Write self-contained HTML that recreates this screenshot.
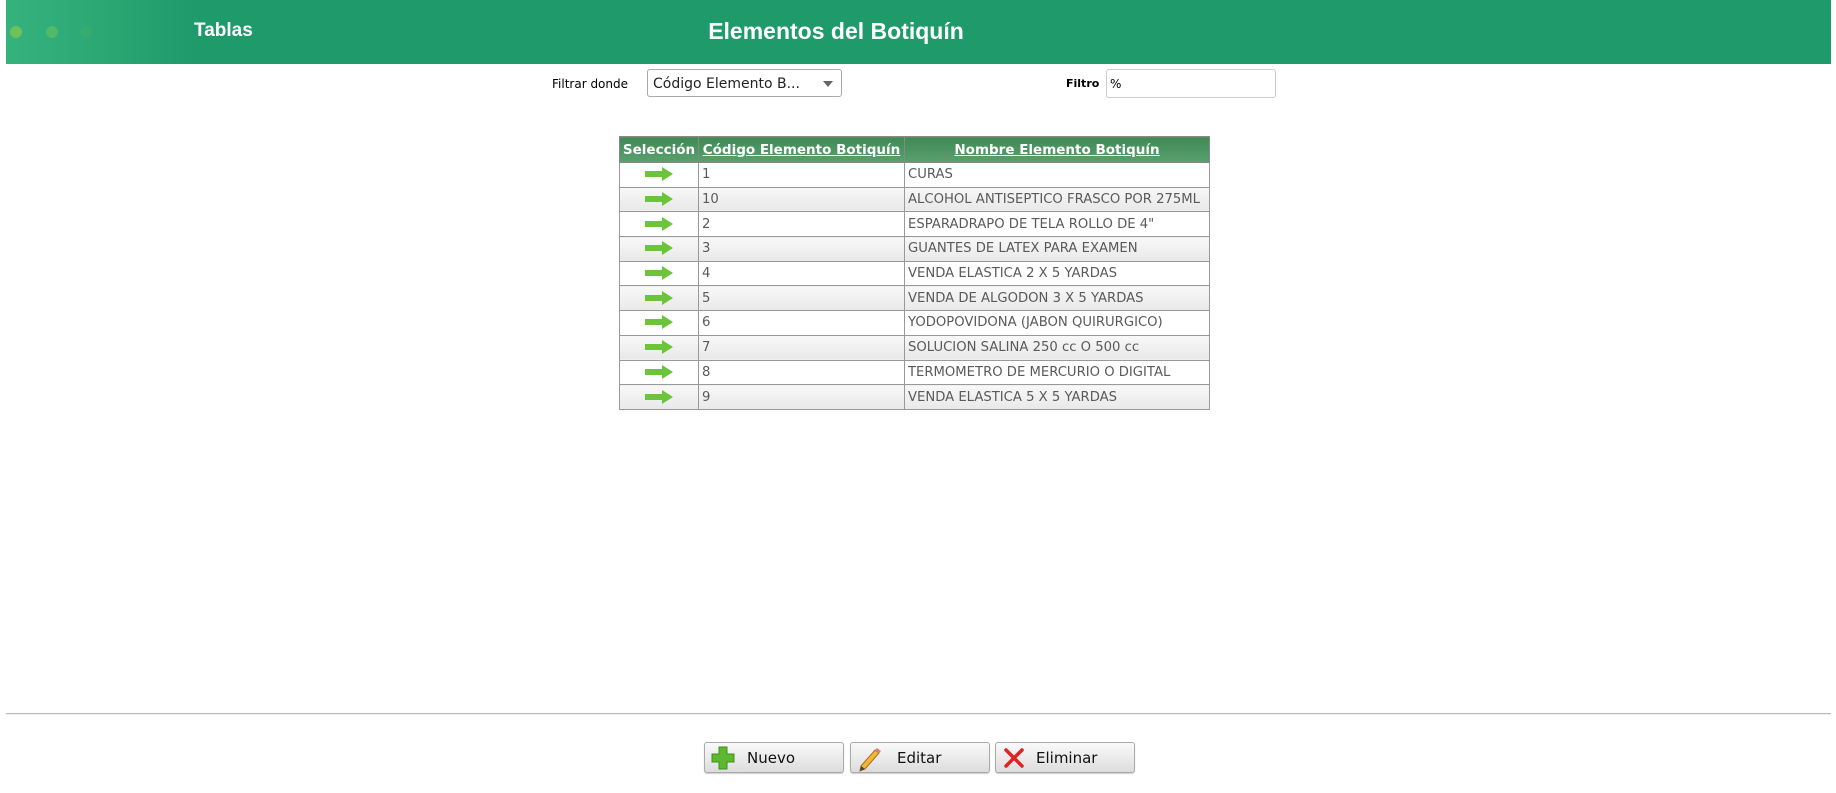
<!DOCTYPE html>
<html><head><meta charset="utf-8"><style>
body{margin:0;width:1836px;height:793px;background:#fff;font-family:"DejaVu Sans","Liberation Sans",sans-serif;position:relative;overflow:hidden}
.hdr{position:absolute;left:6px;top:0;width:1825px;height:64px;background:linear-gradient(90deg,#35b27d 0,#2aa673 110px,#1e9a6b 190px,#1e9a6b 100%)}
.dot{position:absolute;top:26px;width:12px;height:12px;border-radius:50%}
.hdr .t1{position:absolute;left:188px;top:20px;color:#fff;font:bold 19px "Liberation Sans",sans-serif}
.hdr .t2{position:absolute;left:0;width:1660px;text-align:center;top:18px;color:#fff;font:bold 23px "Liberation Sans",sans-serif}
.lbl{position:absolute;font-size:12px;color:#000;top:77px}
.sel{position:absolute;left:647px;top:69px;width:195px;height:28px;border:1px solid #aaa;border-radius:3px;font-size:14px;line-height:28px;box-sizing:border-box;padding-left:5px;color:#222;background:#fff}
.sel:after{content:"";position:absolute;right:8px;top:11px;border:5px solid transparent;border-top:6px solid #666}
.inp{position:absolute;left:1106px;top:69px;width:170px;height:29px;border:1px solid #ccc;border-radius:3px;box-sizing:border-box;font-size:12px;padding:7px 3px}
table{position:absolute;left:619px;top:136px;border-collapse:collapse;font-size:13.2px;color:#5a5a5a}
th{height:25px;background:linear-gradient(#3e8a54,#5aa070);color:#fff;font:bold 13.5px "DejaVu Sans",sans-serif;border:1px solid #888;padding:0 2px;white-space:nowrap}
th u{text-decoration:underline}
td{height:23.7px;border:1px solid #999;padding:0 3px;white-space:nowrap}
tr:nth-child(odd) td{background:linear-gradient(#f8f8f8,#e8e8e8)}
td.a{text-align:center}
.arr{display:inline-block;width:28px;height:14px;vertical-align:middle}
.line{position:absolute;left:6px;top:713px;width:1825px;height:1px;background:#bbb;border-bottom:1px solid #eee}
.btn{position:absolute;top:742px;width:140px;height:31px;box-sizing:border-box;border:1px solid #aaa;border-radius:3px;background:linear-gradient(#fafafa,#dcdcdc);font:15px "DejaVu Sans",sans-serif;color:#111;box-shadow:0 1px 1px #ccc}
.btn span{position:absolute;top:6px}
.btn svg{position:absolute;left:6px;top:3px}
</style></head><body>
<div class="hdr">
<div class="dot" style="left:4px;background:#6fc15a"></div>
<div class="dot" style="left:40px;background:#4fba6a"></div>
<div class="dot" style="left:74px;background:#3aac6c;opacity:.7"></div>
<div class="t1">Tablas</div>
<div class="t2">Elementos del Botiquín</div>
</div>
<div class="lbl" style="left:552px">Filtrar donde</div>
<div class="sel">Código Elemento B...</div>
<div class="lbl" style="left:1066px;font-weight:bold;font-size:11px">Filtro</div>
<div class="inp">%</div>
<table>
<tr><th style="width:74px">Selección</th><th style="width:201px"><u>Código Elemento Botiquín</u></th><th style="width:300px"><u>Nombre Elemento Botiquín</u></th></tr>
<tr><td class="a"><svg class="arr" viewBox="0 0 28 14"><path d="M0 4h17V0l11 7-11 7v-4H0z" fill="#6cc43a"/></svg></td><td>1</td><td>CURAS</td></tr>
<tr><td class="a"><svg class="arr" viewBox="0 0 28 14"><path d="M0 4h17V0l11 7-11 7v-4H0z" fill="#6cc43a"/></svg></td><td>10</td><td>ALCOHOL ANTISEPTICO FRASCO POR 275ML</td></tr>
<tr><td class="a"><svg class="arr" viewBox="0 0 28 14"><path d="M0 4h17V0l11 7-11 7v-4H0z" fill="#6cc43a"/></svg></td><td>2</td><td>ESPARADRAPO DE TELA ROLLO DE 4"</td></tr>
<tr><td class="a"><svg class="arr" viewBox="0 0 28 14"><path d="M0 4h17V0l11 7-11 7v-4H0z" fill="#6cc43a"/></svg></td><td>3</td><td>GUANTES DE LATEX PARA EXAMEN</td></tr>
<tr><td class="a"><svg class="arr" viewBox="0 0 28 14"><path d="M0 4h17V0l11 7-11 7v-4H0z" fill="#6cc43a"/></svg></td><td>4</td><td>VENDA ELASTICA 2 X 5 YARDAS</td></tr>
<tr><td class="a"><svg class="arr" viewBox="0 0 28 14"><path d="M0 4h17V0l11 7-11 7v-4H0z" fill="#6cc43a"/></svg></td><td>5</td><td>VENDA DE ALGODON 3 X 5 YARDAS</td></tr>
<tr><td class="a"><svg class="arr" viewBox="0 0 28 14"><path d="M0 4h17V0l11 7-11 7v-4H0z" fill="#6cc43a"/></svg></td><td>6</td><td>YODOPOVIDONA (JABON QUIRURGICO)</td></tr>
<tr><td class="a"><svg class="arr" viewBox="0 0 28 14"><path d="M0 4h17V0l11 7-11 7v-4H0z" fill="#6cc43a"/></svg></td><td>7</td><td>SOLUCION SALINA 250 cc O 500 cc</td></tr>
<tr><td class="a"><svg class="arr" viewBox="0 0 28 14"><path d="M0 4h17V0l11 7-11 7v-4H0z" fill="#6cc43a"/></svg></td><td>8</td><td>TERMOMETRO DE MERCURIO O DIGITAL</td></tr>
<tr><td class="a"><svg class="arr" viewBox="0 0 28 14"><path d="M0 4h17V0l11 7-11 7v-4H0z" fill="#6cc43a"/></svg></td><td>9</td><td>VENDA ELASTICA 5 X 5 YARDAS</td></tr>
</table>
<div class="line"></div>
<div class="btn" style="left:704px"><svg width="24" height="24" viewBox="0 0 24 24"><path d="M8 1h8v7h7v8h-7v7H8v-7H1V8h7z" fill="#5cb82e" stroke="#3e8f1c" stroke-width="1"/></svg><span style="left:42px">Nuevo</span></div>
<div class="btn" style="left:850px"><svg width="24" height="26" viewBox="0 0 24 26"><path d="M4 20L18 4l4 3L8 23l-5 2z" fill="#f3b53a" stroke="#a86d10"/><path d="M18 4l2-2 4 3-2 2z" fill="#e07b8a"/><path d="M3 25l1-5 4 3z" fill="#444"/></svg><span style="left:46px">Editar</span></div>
<div class="btn" style="left:995px"><svg width="24" height="24" viewBox="0 0 24 24"><path d="M4 4L20 20M20 4L4 20" stroke="#e02424" stroke-width="3.5" stroke-linecap="round"/></svg><span style="left:40px">Eliminar</span></div>
</body></html>
